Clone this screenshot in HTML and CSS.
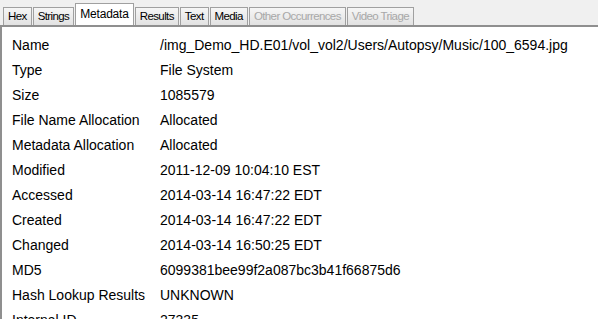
FILE: index.html
```html
<!DOCTYPE html>
<html lang="en">
<head>
  <meta charset="UTF-8" />
  <title>Metadata</title>
  <link rel="stylesheet" href="styles.css">
</head>
<body>

<div class="tabs">
  <div class="tab">Hex</div>
  <div class="tab">Strings</div>
  <div class="tab active">Metadata</div>
  <div class="tab">Results</div>
  <div class="tab">Text</div>
  <div class="tab">Media</div>
  <div class="tab disabled">Other Occurrences</div>
  <div class="tab disabled">Video Triage</div>
</div>

<div class="panel">
  <table class="meta">
    <tr><td>Name</td><td>/img_Demo_HD.E01/vol_vol2/Users/Autopsy/Music/100_6594.jpg</td></tr>
    <tr><td>Type</td><td>File System</td></tr>
    <tr><td>Size</td><td>1085579</td></tr>
    <tr><td>File Name Allocation</td><td>Allocated</td></tr>
    <tr><td>Metadata Allocation</td><td>Allocated</td></tr>
    <tr><td>Modified</td><td>2011-12-09 10:04:10 EST</td></tr>
    <tr><td>Accessed</td><td>2014-03-14 16:47:22 EDT</td></tr>
    <tr><td>Created</td><td>2014-03-14 16:47:22 EDT</td></tr>
    <tr><td>Changed</td><td>2014-03-14 16:50:25 EDT</td></tr>
    <tr><td>MD5</td><td>6099381bee99f2a087bc3b41f66875d6</td></tr>
    <tr><td>Hash Lookup Results</td><td>UNKNOWN</td></tr>
    <tr><td>Internal ID</td><td>27335</td></tr>
  </table>
</div>

</body>
</html>
```

FILE: styles.css
```css
body {
  margin: 0;
  background: #f0f0f0;
  font-family: 'Liberation Sans', Arial, sans-serif;
  overflow: hidden;
}
.tabs {
  display: flex;
  align-items: flex-end;
  height: 25px;
  padding-left: 3px;
  border-bottom: 2px solid #8f8f8f;
}
.tab {
  height: 17px;
  padding: 0 4px;
  font-size: 11.5px;
  letter-spacing: -0.6px;
  line-height: 17px;
  color: #000;
  background: linear-gradient(#f6f6f6, #e2e2e2);
  border: 1px solid #a0a0a0;
  border-bottom: none;
  margin-right: 1px;
}
.tab.active {
  height: 21px;
  line-height: 20px;
  background: #fff;
  font-size: 12px;
  letter-spacing: -0.2px;
  padding: 0 4px;
}
.tab.disabled {
  color: #a8a8a8;
}
.panel {
  background: #fff;
  border-left: 2px solid #8f8f8f;
  height: 300px;
  padding-top: 5px;
}
.meta {
  border-collapse: collapse;
  font-size: 14px;
  color: #000;
}
.meta td {
  height: 25px;
  padding: 0 0 0 10px;
  white-space: nowrap;
}
.meta td:first-child {
  width: 138px;
}
```
